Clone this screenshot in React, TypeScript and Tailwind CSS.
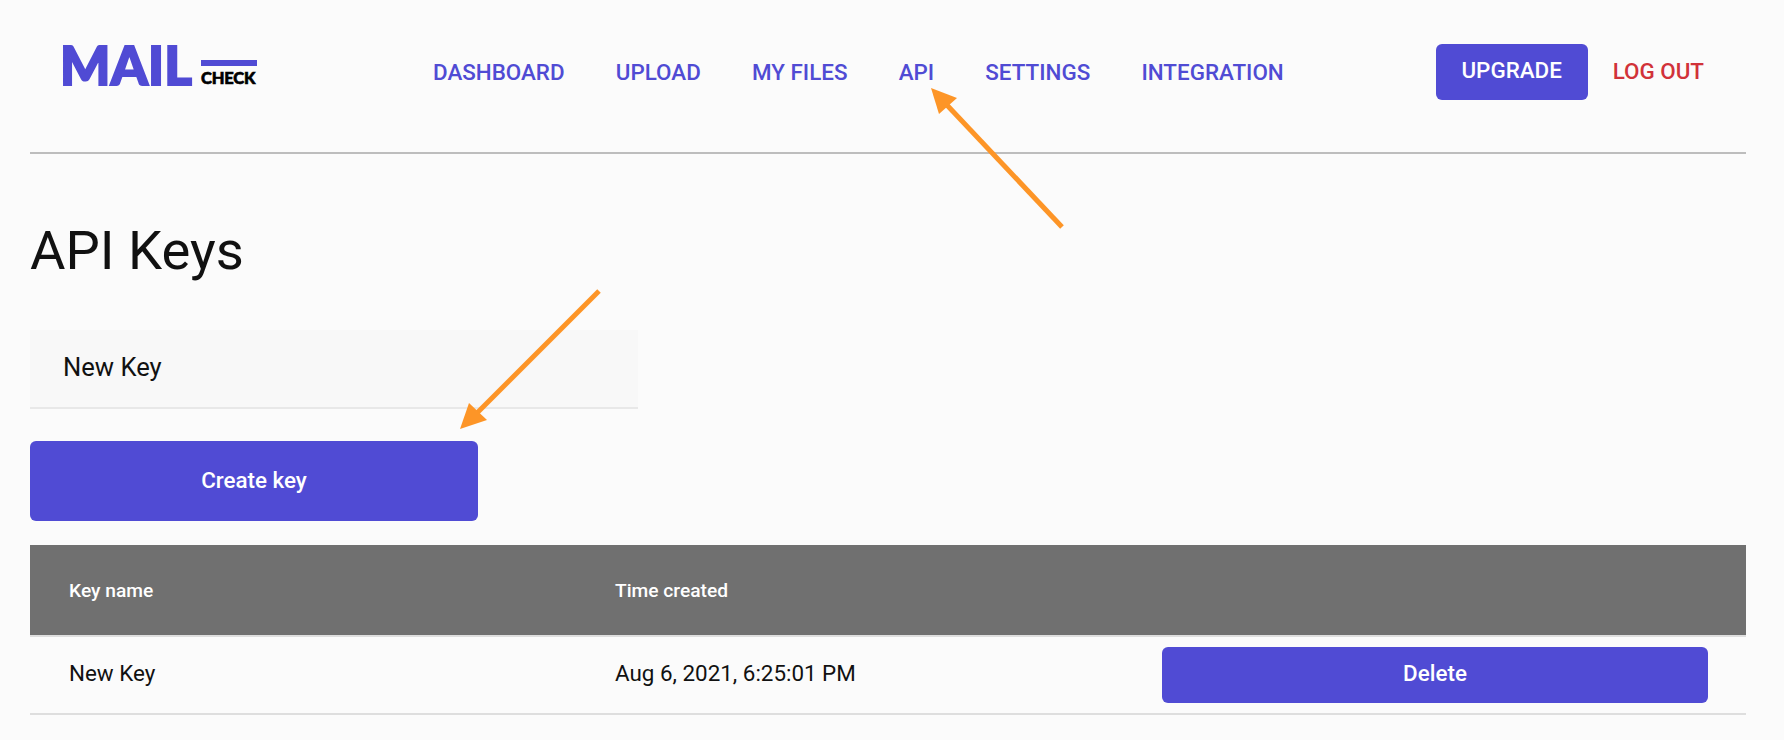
const navLinks = ['DASHBOARD', 'UPLOAD', 'MY FILES', 'API', 'SETTINGS', 'INTEGRATION'];

const Arrow = ({ className, line, head, viewBox }: { className: string; line: number[]; head: string; viewBox: string }) => (
    <svg className={className} viewBox={viewBox} fill="none">
        <line x1={line[0]} y1={line[1]} x2={line[2]} y2={line[3]} stroke="#fd9527" strokeWidth="5" />
        <polygon points={head} fill="#fd9527" />
    </svg>
);

const App = () => {
    return (
        <div className="relative min-h-[740px] overflow-hidden bg-[#fbfbfb] pr-[38px] pl-[30px] font-['Roboto',sans-serif] text-[#111111]">
            {/* Header */}
            <header className="flex h-[154px] items-start border-b-2 border-[#bdbdbd]">
                <div className="mt-[46px] ml-[31px] flex h-[38px] w-[196px] items-start gap-[6px]">
                    <span className="-ml-[1px] w-[136px] font-['Lato',sans-serif] text-[53px] leading-[38px] font-black tracking-[0.2px] whitespace-nowrap text-[#504bd4] [-webkit-text-stroke:2px_#504bd4]">MAIL</span>
                    <div className="flex flex-col items-start pt-[14px]">
                        <div className="h-[6px] w-[56px] bg-[#504bd4]" />
                        <span className="mt-[6px] font-['Lato',sans-serif] text-[16.5px] leading-[13px] font-black tracking-[-0.2px] text-black [-webkit-text-stroke:0.6px_#000]">CHECK</span>
                    </div>
                </div>
                <nav className="mt-[58px] ml-[176px] flex gap-[51.2px]">
                    {navLinks.map((link) => (
                        <a key={link} className="text-[22.4px] leading-[28px] font-medium text-[#504bd4]">
                            {link}
                        </a>
                    ))}
                </nav>
                <div className="mt-[44px] ml-auto flex items-center pr-[42px]">
                    <button className="h-[56px] w-[152px] rounded-[6px] bg-[#504bd4] pb-[2px] text-[22.4px] font-medium text-white">UPGRADE</button>
                    <a className="ml-[25px] text-[22.4px] font-medium text-[#d13239]">LOG OUT</a>
                </div>
            </header>

            {/* Page content */}
            <h1 className="mt-[65px] text-[54.4px] leading-[64px] font-normal">API Keys</h1>

            <input
                className="mt-[47px] block h-[79px] w-[608px] border-b-2 border-[#e8e8e8] bg-[#f8f8f8] pb-[3px] pl-[33px] text-[25.6px] text-[#111111] outline-none"
                defaultValue="New Key"
            />

            <button className="mt-[32px] block h-[80px] w-[448px] rounded-[6px] bg-[#504bd4] text-[22.4px] font-medium text-white">Create key</button>

            {/* Keys table */}
            <div className="mt-[24px]">
                <div className="grid h-[92px] grid-cols-[585px_508px_1fr] items-center border-b-2 border-[#dedede] bg-[#707070] pt-[2px] text-[19.2px] font-medium text-white">
                    <span className="pl-[39px]">Key name</span>
                    <span>Time created</span>
                    <span />
                </div>
                <div className="grid h-[78px] grid-cols-[585px_508px_1fr] items-center border-b-2 border-[#dedede] text-[22.4px]">
                    <span className="pb-[2px] pl-[39px]">New Key</span>
                    <span className="pb-[2px]">Aug 6, 2021, 6:25:01 PM</span>
                    <div className="pr-[38px] pl-[39px]">
                        <button className="h-[56px] w-full rounded-[6px] bg-[#504bd4] pb-[2px] text-[22.4px] font-medium text-white">Delete</button>
                    </div>
                </div>
            </div>

            {/* Annotation arrows */}
            <Arrow
                className="absolute top-[80px] left-[920px] h-[160px] w-[150px]"
                viewBox="920 80 150 160"
                line={[1062, 227, 945, 103]}
                head="931,88 957,98 939,114"
            />
            <Arrow
                className="absolute top-[280px] left-[450px] h-[160px] w-[160px]"
                viewBox="450 280 160 160"
                line={[599, 291, 476, 414]}
                head="460,429 487,420 469,403"
            />
        </div>
    );
};

export default App;
